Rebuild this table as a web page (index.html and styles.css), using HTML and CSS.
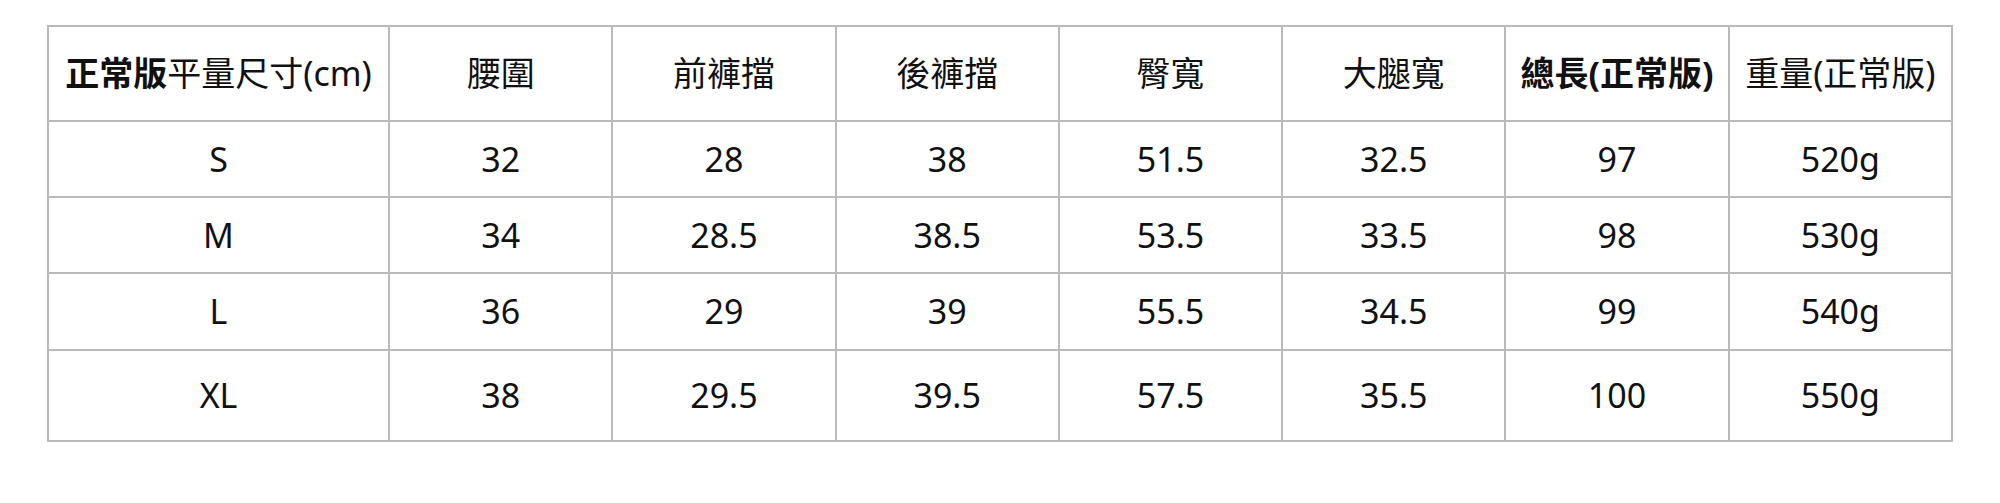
FILE: index.html
```html
<!DOCTYPE html>
<html lang="zh-Hant">
<head>
<meta charset="utf-8">
<title>尺寸表</title>
<link rel="stylesheet" href="styles.css">
</head>
<body>
<table class="size-table">
  <colgroup>
    <col class="col-first">
    <col class="col"><col class="col"><col class="col"><col class="col">
    <col class="col"><col class="col"><col class="col">
  </colgroup>
  <tbody>
    <tr class="row-head">
      <td><b>正常版</b>平量尺寸(cm)</td>
      <td>腰圍</td>
      <td>前褲擋</td>
      <td>後褲擋</td>
      <td>臀寬</td>
      <td>大腿寬</td>
      <td><b>總長(正常版)</b></td>
      <td>重量(正常版)</td>
    </tr>
    <tr class="row-a">
      <td>S</td><td>32</td><td>28</td><td>38</td><td>51.5</td><td>32.5</td><td>97</td><td>520g</td>
    </tr>
    <tr class="row-a">
      <td>M</td><td>34</td><td>28.5</td><td>38.5</td><td>53.5</td><td>33.5</td><td>98</td><td>530g</td>
    </tr>
    <tr class="row-b">
      <td>L</td><td>36</td><td>29</td><td>39</td><td>55.5</td><td>34.5</td><td>99</td><td>540g</td>
    </tr>
    <tr class="row-last">
      <td>XL</td><td>38</td><td>29.5</td><td>39.5</td><td>57.5</td><td>35.5</td><td>100</td><td>550g</td>
    </tr>
  </tbody>
</table>
</body>
</html>
```

FILE: styles.css
```css
html, body {
  margin: 0;
  padding: 0;
  background: #ffffff;
}

body {
  padding: 25px 0 0 47px;
  font-family: "Noto Sans", "Noto Sans CJK TC", sans-serif;
  color: #111111;
}

.size-table {
  width: 1906px;
  table-layout: fixed;
  border-collapse: separate;
  border-spacing: 0;
  border-top: 2px solid #bababa;
  border-left: 2px solid #bababa;
}

.col-first {
  width: 341px;
}

.size-table td {
  padding: 0;
  text-align: center;
  vertical-align: middle;
  font-size: 34px;
  line-height: 1.2;
  font-weight: 400;
  border-right: 2px solid #bababa;
  border-bottom: 2px solid #bababa;
  white-space: nowrap;
}

.size-table b {
  font-weight: 700;
}

.row-head { height: 95px; }
.row-a { height: 76px; }
.row-b { height: 77px; }
.row-last { height: 91px; }
```
